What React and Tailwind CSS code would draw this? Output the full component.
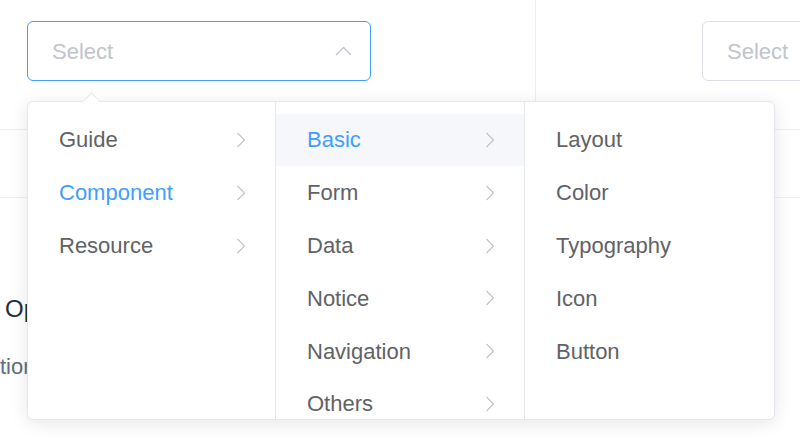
const columns = [
  { items: ['Guide', 'Component', 'Resource'], active: 'Component', arrows: true, width: 'w-[248px]' },
  { items: ['Basic', 'Form', 'Data', 'Notice', 'Navigation', 'Others'], active: 'Basic', hover: 'Basic', arrows: true, width: 'w-[249px]' },
  { items: ['Layout', 'Color', 'Typography', 'Icon', 'Button'], arrows: false, width: 'flex-1' },
];

const ChevronRight = () => (
  <svg width="10" height="16" viewBox="0 0 10 16" fill="none" stroke="#c0c4cc" strokeWidth="1.2">
    <polyline points="1.5,1 8.5,8 1.5,15" />
  </svg>
);

const ChevronUp = () => (
  <svg width="17" height="10" viewBox="0 0 17 10" fill="none" stroke="#c0c4cc" strokeWidth="1.3">
    <polyline points="1,9 8.5,1.5 16,9" />
  </svg>
);

const SelectInput = ({ focused, children }) => (
  <div
    className={`flex h-[60px] w-[344px] shrink-0 items-center justify-between rounded-[6px] border bg-white pl-[24px] pr-[18px] ${
      focused ? 'border-[#409eff]' : 'border-[#dcdfe6]'
    }`}
  >
    <span className="text-[22px] text-[#c0c4cc]">Select</span>
    {children}
  </div>
);

export default function App() {
  return (
    <div className="relative h-[443px] w-[800px] overflow-hidden bg-white font-['Liberation_Sans',Arial,sans-serif]">
      <div className="flex h-[130px] border-b border-[#ebeef5]">
        <div className="w-[536px] shrink-0 border-r border-[#ebeef5] pl-[27px] pt-[21px]">
          <SelectInput focused>
            <ChevronUp />
          </SelectInput>
        </div>
        <div className="min-w-0 flex-1 pl-[166px] pt-[21px]">
          <SelectInput />
        </div>
      </div>
      <div className="h-[68px] border-b border-[#ebeef5]" />
      <div className="h-[215px] border-b border-[#ebeef5]">
        <h3 className="mt-[95px] pl-[5px] text-[24px] leading-[32px] text-[#1f2f3d]">Options</h3>
        <p className="mt-[28px] text-[22px] leading-[28px] text-[#5e6d82]">tion of the cascader</p>
      </div>

      <div className="absolute left-[27px] top-[101px] flex h-[319px] w-[748px] rounded-[6px] border border-[#e4e7ed] bg-white shadow-[0_3px_18px_rgba(0,0,0,0.1)]">
        <div className="absolute left-[57px] top-[-7px] h-[13px] w-[13px] rotate-45 border-l border-t border-[#e4e7ed] bg-white" />
        {columns.map((col, i) => (
          <div
            key={i}
            className={`${col.width} overflow-hidden pt-[11.6px] ${i < columns.length - 1 ? 'border-r border-[#e4e7ed]' : ''}`}
          >
            {col.items.map((item) => (
              <div
                key={item}
                className={`flex h-[52.8px] items-center justify-between pl-[31px] pr-[29px] text-[22px] ${
                  col.hover === item ? 'bg-[#f5f7fa]' : ''
                } ${col.active === item ? 'text-[#409eff]' : 'text-[#606266]'}`}
              >
                <span>{item}</span>
                {col.arrows && <ChevronRight />}
              </div>
            ))}
          </div>
        ))}
      </div>
    </div>
  );
}
